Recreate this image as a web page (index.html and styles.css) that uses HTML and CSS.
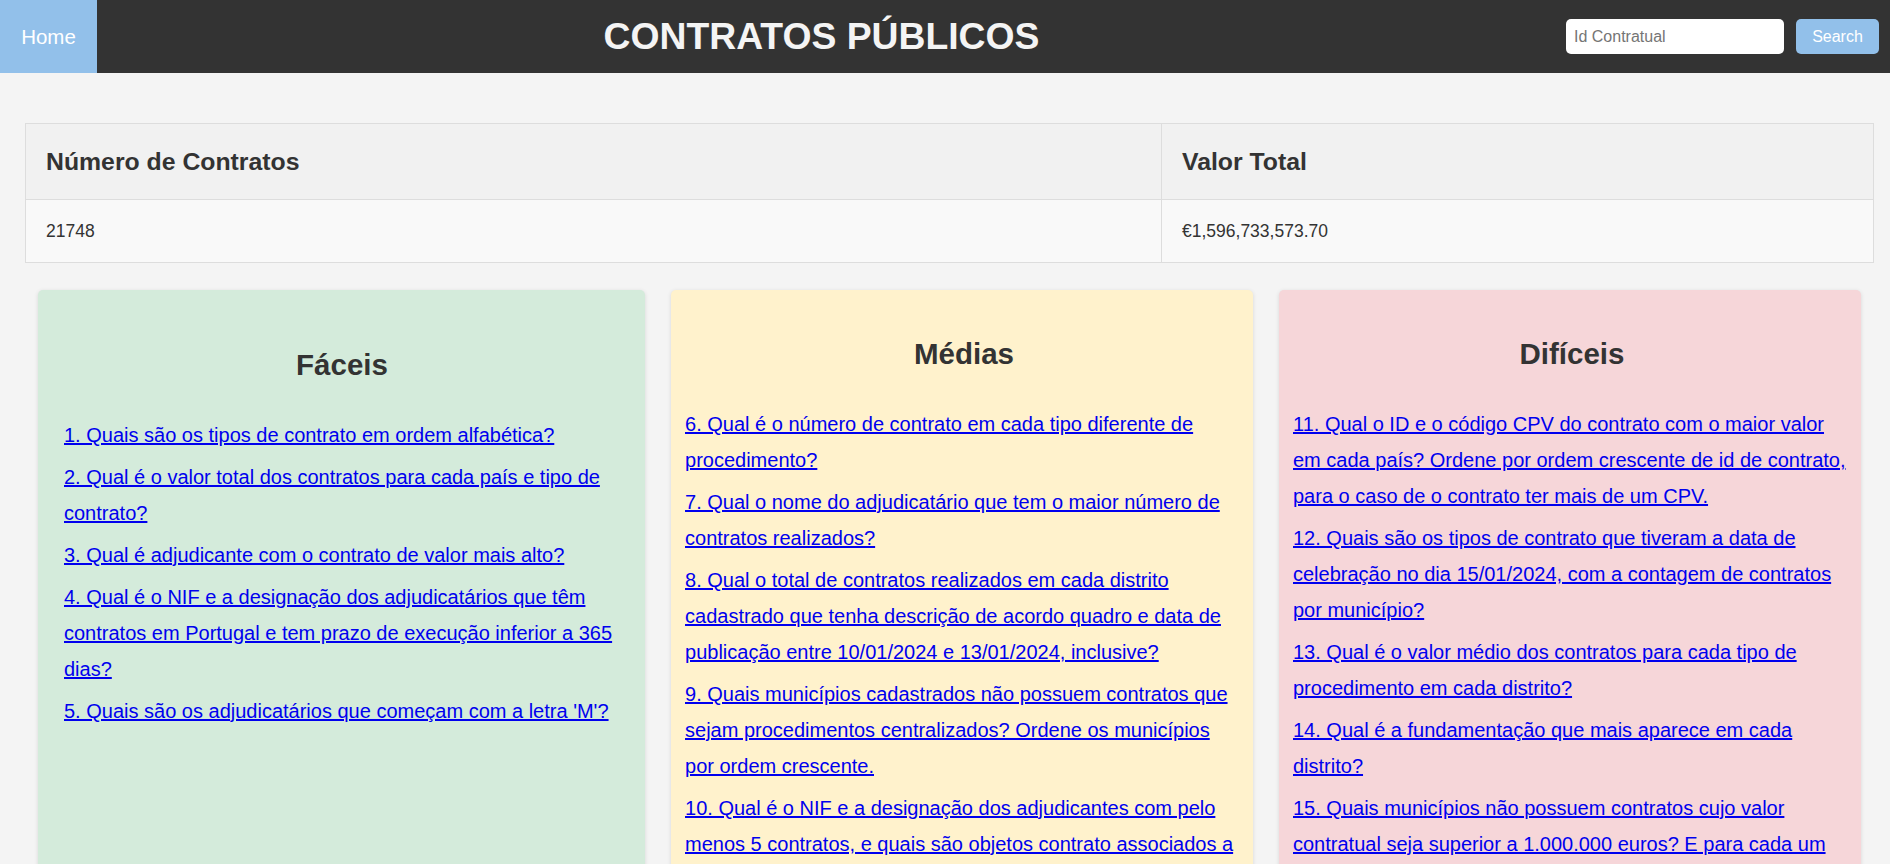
FILE: index.html
```html
<!DOCTYPE html>
<html lang="pt">
<head>
<meta charset="utf-8">
<title>Contratos Públicos</title>
<link rel="stylesheet" href="styles.css">
</head>
<body>
<header class="topbar">
  <a class="home" href="#">Home</a>
  <h1 class="title">CONTRATOS PÚBLICOS</h1>
  <form class="search">
    <input class="search-input" type="text" placeholder="Id Contratual">
    <button class="search-btn" type="button">Search</button>
  </form>
</header>

<table class="summary">
  <colgroup><col class="col-a"><col class="col-b"></colgroup>
  <thead>
    <tr><th>Número de Contratos</th><th>Valor Total</th></tr>
  </thead>
  <tbody>
    <tr><td>21748</td><td>€1,596,733,573.70</td></tr>
  </tbody>
</table>

<main class="cards">
  <section class="card card-easy">
    <h2>Fáceis</h2>
    <ul class="qlist">
      <li><a href="#">1. Quais são os tipos de contrato em ordem alfabética?</a></li>
      <li><a href="#">2. Qual é o valor total dos contratos para cada país e tipo de contrato?</a></li>
      <li><a href="#">3. Qual é adjudicante com o contrato de valor mais alto?</a></li>
      <li><a href="#">4. Qual é o NIF e a designação dos adjudicatários que têm contratos em Portugal e tem prazo de execução inferior a 365 dias?</a></li>
      <li><a href="#">5. Quais são os adjudicatários que começam com a letra 'M'?</a></li>
    </ul>
  </section>
  <section class="card card-mid">
    <h2>Médias</h2>
    <ul class="qlist">
      <li><a href="#">6. Qual é o número de contrato em cada tipo diferente de procedimento?</a></li>
      <li><a href="#">7. Qual o nome do adjudicatário que tem o maior número de contratos realizados?</a></li>
      <li><a href="#">8. Qual o total de contratos realizados em cada distrito cadastrado que tenha descrição de acordo quadro e data de publicação entre 10/01/2024 e 13/01/2024, inclusive?</a></li>
      <li><a href="#">9. Quais municípios cadastrados não possuem contratos que sejam procedimentos centralizados? Ordene os municípios por ordem crescente.</a></li>
      <li><a href="#">10. Qual é o NIF e a designação dos adjudicantes com pelo menos 5 contratos, e quais são objetos contrato associados a eles?</a></li>
    </ul>
  </section>
  <section class="card card-hard">
    <h2>Difíceis</h2>
    <ul class="qlist">
      <li><a href="#">11. Qual o ID e o código CPV do contrato com o maior valor em cada país? Ordene por ordem crescente de id de contrato, para o caso de o contrato ter mais de um CPV.</a></li>
      <li><a href="#">12. Quais são os tipos de contrato que tiveram a data de celebração no dia 15/01/2024, com a contagem de contratos por município?</a></li>
      <li><a href="#">13. Qual é o valor médio dos contratos para cada tipo de procedimento em cada distrito?</a></li>
      <li><a href="#">14. Qual é a fundamentação que mais aparece em cada distrito?</a></li>
      <li><a href="#">15. Quais municípios não possuem contratos cujo valor contratual seja superior a 1.000.000 euros? E para cada um desses municípios, qual o número de contratos?</a></li>
    </ul>
  </section>
</main>
</body>
</html>
```

FILE: styles.css
```css
* { box-sizing: border-box; }

body {
  margin: 0;
  background: #f4f4f4;
  font-family: "Liberation Sans", Arial, sans-serif;
  color: #333;
}

.topbar {
  display: flex;
  align-items: center;
  height: 73px;
  background: #333;
}

.home {
  align-self: stretch;
  display: flex;
  align-items: center;
  justify-content: center;
  width: 97px;
  background: #92c0ea;
  color: #fff;
  font-size: 20.5px;
  text-decoration: none;
}

.title {
  flex: 1;
  margin: 0 20px 0 0;
  text-align: center;
  color: #f4f4f4;
  font-size: 37.3px;
  font-weight: bold;
  line-height: 1;
}

.search {
  display: flex;
  gap: 12px;
  margin: 0 11px 0 0;
}

.search-input {
  width: 218px;
  height: 35px;
  border: none;
  border-radius: 5px;
  padding: 0 8px;
  font-family: "Liberation Sans", Arial, sans-serif;
  font-size: 16px;
  background: #fff;
}

.search-input::placeholder { color: #757575; }

.search-btn {
  width: 83px;
  height: 35px;
  border: none;
  border-radius: 5px;
  background: #92c0ea;
  color: #fff;
  font-family: "Liberation Sans", Arial, sans-serif;
  font-size: 16px;
  padding: 0;
}

.summary {
  width: calc(100% - 41px);
  margin: 50px 16px 0 25px;
  border-collapse: collapse;
  table-layout: fixed;
}

.col-a { width: 1136px; }

.summary th,
.summary td {
  border: 1px solid #ddd;
  text-align: left;
  padding: 0 20px;
}

.summary th {
  height: 76px;
  background: #f1f1f1;
  font-size: 24.8px;
  font-weight: bold;
  color: #333;
}

.summary td {
  height: 63px;
  background: #f9f9f9;
  font-size: 17.5px;
  color: #333;
}

.cards {
  display: grid;
  grid-template-columns: minmax(0, 606fr) minmax(0, 581fr) minmax(0, 581fr);
  gap: 26px;
  margin: 27px 16px 0 25px;
  padding: 0 13px;
}

.card {
  border-radius: 5px;
  box-shadow: 0 1px 4px rgba(0, 0, 0, 0.12);
  padding: 14px 10px 30px 14px;
}

.card-easy { background: #d4ebdb; padding: 25px 25px 30px 26px; }
.card-mid { background: #fff2cc; }
.card-hard { background: #f6d6d9; }

.card h2 {
  margin: 32px 0 34px;
  text-align: center;
  font-size: 29.5px;
  line-height: 36px;
  font-weight: bold;
  color: #333;
}

.qlist {
  list-style: none;
  margin: 0;
  padding: 0;
}

.qlist li {
  margin: 0 0 6px;
  font-size: 20px;
  line-height: 36px;
}

.qlist a {
  color: #0000ee;
  text-decoration: underline;
}
```
